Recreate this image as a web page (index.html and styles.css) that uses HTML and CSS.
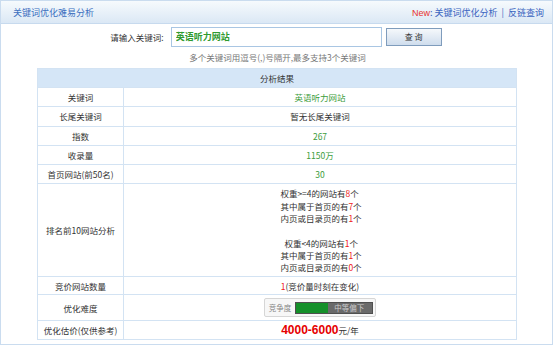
FILE: index.html
```html
<!DOCTYPE html>
<html lang="zh-CN">
<head>
  <meta charset="UTF-8" />
  <title>关键词优化难易分析</title>
  <link rel="stylesheet" href="styles.css">
</head>
<body>

  <div class="panel">
    <div class="panel-head">
      <span class="panel-title">关键词优化难易分析</span>
      <span class="head-links">
        <span class="new">New</span>:
        <a href="#">关键词优化分析</a>
        <span class="sep">|</span>
        <a href="#">反链查询</a>
      </span>
    </div>

    <form class="search">
      <label for="kw">请输入关键词:</label>
      <input type="text" id="kw" value="英语听力网站" />
      <button type="submit">查 询</button>
    </form>
    <p class="hint">多个关键词用逗号(,)号隔开,最多支持3个关键词</p>

    <table class="result">
      <tr class="result-head">
        <th colspan="2">分析结果</th>
      </tr>
      <tr>
        <td class="name">关键词</td>
        <td class="green">英语听力网站</td>
      </tr>
      <tr>
        <td class="name">长尾关键词</td>
        <td>暂无长尾关键词</td>
      </tr>
      <tr>
        <td class="name">指数</td>
        <td class="green">267</td>
      </tr>
      <tr>
        <td class="name">收录量</td>
        <td class="green">1150万</td>
      </tr>
      <tr>
        <td class="name">首页网站(前50名)</td>
        <td class="green">30</td>
      </tr>
      <tr class="rank-row">
        <td class="name">排名前10网站分析</td>
        <td>
          <div class="rank">
            <div>权重&gt;=4的网站有<em>8</em>个</div>
            <div>其中属于首页的有<em>7</em>个</div>
            <div>内页或目录页的有<em>1</em>个</div>
            <div>&nbsp;</div>
            <div class="indent">权重&lt;4的网站有<em>1</em>个</div>
            <div>其中属于首页的有<em>1</em>个</div>
            <div>内页或目录页的有<em>0</em>个</div>
          </div>
        </td>
      </tr>
      <tr class="bid-row">
        <td class="name">竞价网站数量</td>
        <td><em>1</em>(竞价量时刻在变化)</td>
      </tr>
      <tr class="level-row">
        <td class="name">优化难度</td>
        <td>
          <span class="level">
            <span class="level-label">竞争度</span>
            <span class="level-bar">
              <span class="level-fill" style="width: 42%"></span>
              <span class="level-text">中等偏下</span>
            </span>
          </span>
        </td>
      </tr>
      <tr class="price-row">
        <td class="name">优化估价(仅供参考)</td>
        <td><strong class="price">4000-6000</strong>元/年</td>
      </tr>
    </table>
  </div>

</body>
</html>
```

FILE: styles.css
```css
body {
  margin: 0;
  font-family: "Noto Sans CJK SC", "Liberation Sans", sans-serif;
  font-size: 8.5px;
  color: #333;
  background: #fff;
}

.panel {
  width: 551px;
  height: 343px;
  border: 1px solid #cadcef;
  background: #fff;
}

.panel-head {
  height: 22px;
  display: flex;
  align-items: center;
  justify-content: space-between;
  padding: 0 8px 0 12px;
  background: linear-gradient(to bottom, #f6fafd, #dbe8f5);
  border-bottom: 1px solid #c7daee;
}

.panel-title {
  color: #3b6fbf;
  font-size: 9px;
}

.head-links {
  font-size: 9px;
  color: #3a64c0;
}

.head-links a {
  color: #3a64c0;
  text-decoration: none;
}

.new {
  color: #e8312f;
  font-family: "Liberation Sans", sans-serif;
}

.sep {
  margin: 0 2px;
}

.search {
  display: flex;
  align-items: center;
  justify-content: center;
  height: 21px;
  margin: 2px 0 0 0;
  padding-right: 1px;
}

.search label {
  color: #333;
  margin-right: 7px;
}

.search input {
  width: 211px;
  height: 20px;
  box-sizing: border-box;
  border: 1px solid #a9c6e3;
  padding: 0 4px;
  font-family: inherit;
  font-size: 9px;
  font-weight: bold;
  color: #2f9a2f;
  outline: none;
}

.search button {
  width: 56px;
  height: 18px;
  margin-left: 4px;
  border: 1px solid #7f9cbc;
  background: linear-gradient(to bottom, #f5f8fb, #cfdded);
  font-family: inherit;
  font-size: 8px;
  color: #333;
  padding: 0;
  line-height: 14px;
}

.hint {
  margin: 2px 0 0 0;
  text-align: center;
  color: #777;
  height: 16px;
  line-height: 16px;
  padding-left: 2px;
}

.result {
  margin: 3px 0 0 36px;
  width: 480px;
  border-collapse: collapse;
  text-align: center;
}

.result th,
.result td {
  border: 1px solid #d3e3f3;
  padding: 0;
  height: 18.3px;
  font-weight: normal;
  line-height: 12px;
  white-space: nowrap;
}

.result th {
  background: #d5e6f7;
  color: #333;
  height: 18px;
}

.result td.name {
  width: 85px;
  color: #333;
}

.green {
  color: #3c9c3c;
}

.result em {
  font-style: normal;
  color: #f02020;
}

.rank-row td {
  height: 92px;
}

.rank {
  display: inline-block;
  text-align: left;
  line-height: 12.3px;
  padding-left: 2px;
}

.rank .indent {
  padding-left: 4px;
}

.bid-row td {
  height: 17px;
}

.level-row td {
  height: 25px;
}

.price-row td {
  height: 18px;
}

.level {
  display: inline-flex;
  align-items: center;
  height: 17px;
  padding: 0 2px 0 4px;
  border: 1px solid #d6d6d6;
  border-radius: 2px;
  background: #f7f7f7;
  color: #888;
  font-size: 7.5px;
  vertical-align: middle;
}

.level-label {
  margin-right: 4px;
}

.level-bar {
  position: relative;
  display: inline-block;
  width: 76px;
  height: 10px;
  background: #6a6a6a;
  border: 1px solid #4f4f4f;
}

.level-fill {
  display: block;
  height: 100%;
  background: #15902a;
}

.level-text {
  position: absolute;
  top: -1px;
  left: 38px;
  color: #cccccc;
  line-height: 12px;
}

.price {
  color: #e60000;
  font-size: 12px;
  font-family: "Liberation Sans", sans-serif;
  font-weight: bold;
}
```
